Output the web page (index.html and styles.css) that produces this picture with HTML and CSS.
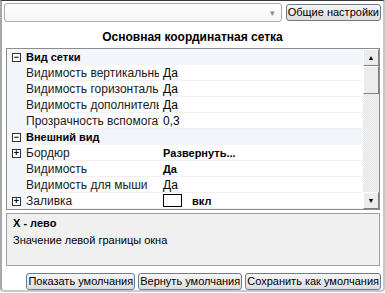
FILE: index.html
```html
<!DOCTYPE html>
<html lang="ru">
<head>
    <meta charset="utf-8">
    <title>Основная координатная сетка</title>
    <link rel="stylesheet" href="styles.css">
</head>
<body>
    <div class="window">
        <div class="toolbar">
            <div class="combo"><span class="combo-arrow">&#9662;</span></div>
            <button class="btn">Общие настройки</button>
        </div>

        <div class="title">Основная координатная сетка</div>

        <div class="grid">
            <div class="rows">
                <div class="row cat"><span class="gut"><i class="box">&minus;</i></span><span class="name">Вид сетки</span></div>
                <div class="row"><span class="gut"></span><span class="name">Видимость вертикальных</span><span class="val">Да</span></div>
                <div class="row"><span class="gut"></span><span class="name">Видимость горизонтальных</span><span class="val">Да</span></div>
                <div class="row"><span class="gut"></span><span class="name">Видимость дополнительных</span><span class="val">Да</span></div>
                <div class="row"><span class="gut"></span><span class="name">Прозрачность вспомогательных</span><span class="val">0,3</span></div>
                <div class="row cat"><span class="gut"><i class="box">&minus;</i></span><span class="name">Внешний вид</span></div>
                <div class="row"><span class="gut"><i class="box">+</i></span><span class="name">Бордюр</span><span class="val b">Развернуть...</span></div>
                <div class="row"><span class="gut"></span><span class="name">Видимость</span><span class="val b">Да</span></div>
                <div class="row"><span class="gut"></span><span class="name">Видимость для мыши</span><span class="val">Да</span></div>
                <div class="row"><span class="gut"><i class="box">+</i></span><span class="name">Заливка</span><span class="val b"><i class="swatch"></i>вкл</span></div>
            </div>
            <div class="scroll">
                <div class="sbtn">&#9650;</div>
                <div class="thumb"></div>
                <div class="track"></div>
                <div class="sbtn">&#9660;</div>
            </div>
        </div>

        <div class="desc">
            <div class="desc-title">X - лево</div>
            <div>Значение левой границы окна</div>
        </div>

        <div class="footer">
            <button class="btn">Показать умолчания</button>
            <button class="btn">Вернуть умолчания</button>
            <button class="btn">Сохранить как умолчания</button>
        </div>
    </div>
</body>
</html>
```

FILE: styles.css
```css
/* General */
body {
    margin: 0;
    font-family: "Liberation Sans", Arial, sans-serif;
    font-size: 11px;
    color: #000;
    background: #fff;
}

.window {
    width: 385px;
    height: 292px;
    border-top: 1px solid #3a3a3a;
    border-left: 2px solid #a8a8a8;
    border-right: 2px solid #c8c8c8;
    border-bottom: 2px solid #c8c8c8;
    border-radius: 0 0 4px 4px;
    padding: 2px 2px 0 2px;
    box-sizing: border-box;
    display: flex;
    flex-direction: column;
}

/* Top bar */
.toolbar {
    display: flex;
    gap: 4px;
    align-items: center;
    height: 19px;
}

.combo {
    flex: 1;
    height: 17px;
    border: 1px solid #a7acb4;
    border-radius: 3px;
    background: linear-gradient(#fff, #f4f4f4);
    display: flex;
    justify-content: flex-end;
    align-items: center;
    padding-right: 6px;
}

.combo-arrow { color: #8a8a8a; font-size: 9px; }

.btn {
    font-family: inherit;
    font-size: 11px;
    height: 17px;
    padding: 0 1px;
    border: 1px solid #6f7b8a;
    border-radius: 3px;
    background: linear-gradient(#f6f6f6, #dedede);
    color: #000;
    line-height: 13px;
}

/* Title */
.title {
    font-weight: bold;
    font-size: 12px;
    text-align: center;
    padding: 8px 0 4px;
}

/* Property grid */
.grid {
    display: flex;
    height: 160px;
    margin: 0 1px 0 2px;
    border: 1px solid #8c8c8c;
    background: #f2f5fa;
}

.rows { flex: 1; overflow: hidden; }

.row {
    display: flex;
    height: 16px;
    line-height: 16px;
    white-space: nowrap;
}

.gut {
    width: 19px;
    flex: none;
    display: flex;
    align-items: center;
    justify-content: center;
}

.name {
    width: 133px;
    flex: none;
    overflow: hidden;
    font-size: 12px;
    color: #1a1a1a;
    background: #fff;
    border-bottom: 1px solid #eef0f3;
    box-sizing: border-box;
}

.val {
    flex: 1;
    padding-left: 4px;
    font-size: 12px;
    background: #fff;
    border-bottom: 1px solid #eef0f3;
    box-sizing: border-box;
    display: flex;
    align-items: center;
}

.cat .name {
    background: none;
    border: none;
    font-weight: bold;
    font-size: 11px;
    color: #000;
    width: auto;
}

.b { font-weight: bold; font-size: 11px; }

.box {
    width: 7px;
    height: 7px;
    border: 1px solid #333;
    background: #fff;
    font-style: normal;
    font-size: 9px;
    line-height: 7px;
    text-align: center;
    font-weight: bold;
}

.swatch {
    width: 17px;
    height: 11px;
    border: 1px solid #000;
    background: #fff;
    margin-right: 10px;
}

/* Scrollbar */
.scroll {
    width: 16px;
    display: flex;
    flex-direction: column;
    background: repeating-conic-gradient(#f4f4f4 0 25%, #e4e4e4 0 50%) 0 0 / 2px 2px;
}

.sbtn {
    height: 15px;
    border: 1px solid;
    border-color: #fff #808080 #808080 #fff;
    background: #ececec;
    font-size: 7px;
    text-align: center;
    line-height: 15px;
}

.thumb {
    height: 26px;
    border: 1px solid;
    border-color: #fff #808080 #808080 #fff;
    background: #ececec;
}

.track { flex: 1; }

/* Description */
.desc {
    height: 55px;
    margin: 3px 1px 0 2px;
    border: 1px solid #a0a0a0;
    background: #f0f0f0;
    padding: 1px 6px;
    line-height: 17px;
}

.desc-title { font-weight: bold; }

/* Footer buttons */
.footer {
    display: flex;
    justify-content: flex-end;
    gap: 3px;
    padding: 7px 0 0;
}
```
